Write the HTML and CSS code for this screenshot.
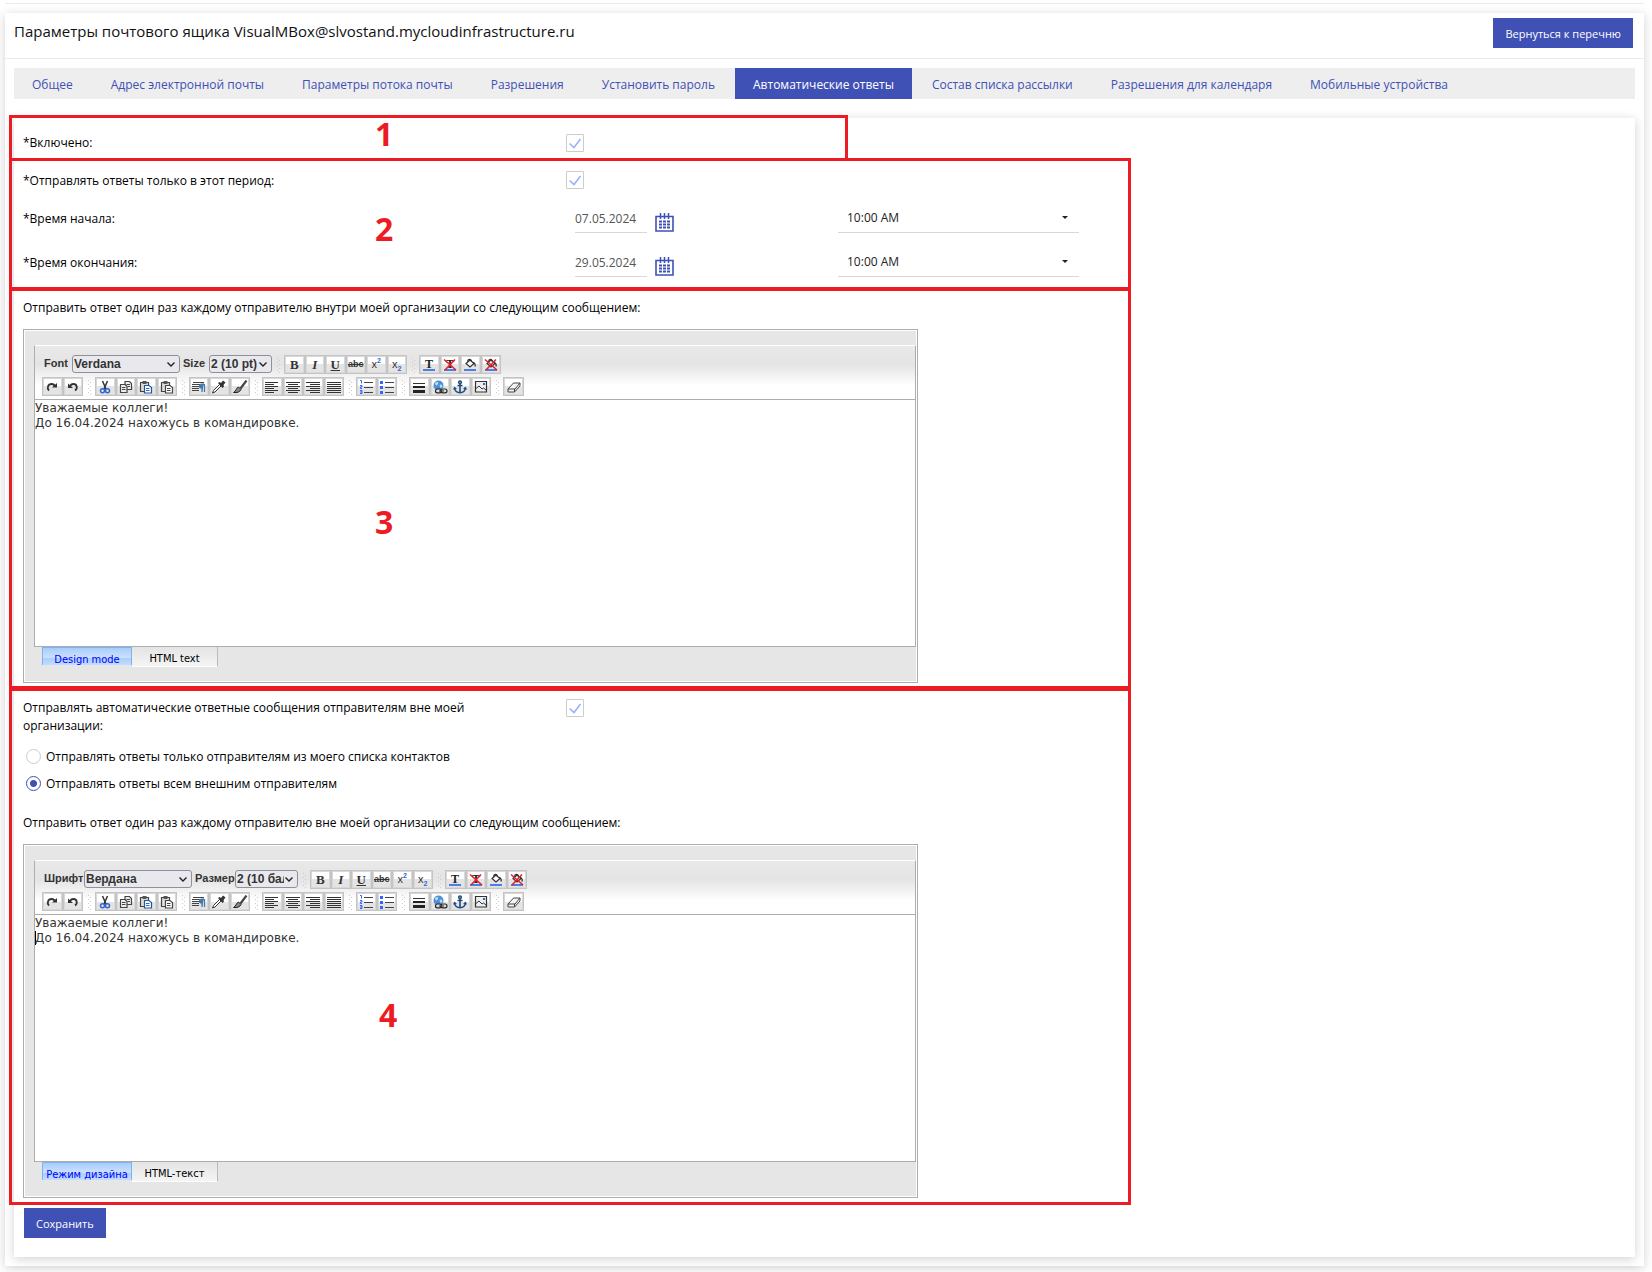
FILE: index.html
```html
<!DOCTYPE html>
<html lang="ru">
<head>
<meta charset="utf-8">
<title>Параметры почтового ящика</title>
<meta name="viewport" content="width=device-width, initial-scale=1">
<link rel="stylesheet" href="styles.css">
</head>
<body>
<svg class="sprite" aria-hidden="true">
  <symbol id="i-redo" viewBox="0 0 16 14"><path d="M5 10.500C2.500 8 4 4 7.500 4 9.500 4 10.500 5 11 6.500" fill="none" stroke="#333" stroke-width="1.800"/><path d="M8 7.500h5V3z" fill="#333"/></symbol>
  <symbol id="i-undo" viewBox="0 0 16 14"><path d="M10 10.500C13 8.500 12 4 8.500 4 6.500 4 5.500 5 5 6.500" fill="none" stroke="#333" stroke-width="1.800"/><path d="M8 8H3V3.500z" fill="#333"/></symbol>
  <symbol id="i-cut" viewBox="0 0 16 14"><path d="M5.500 1 9 9M10.500 1 7 9" stroke="#333" stroke-width="1.500"/><g fill="none" stroke="#36c" stroke-width="1.500"><circle cx="5.500" cy="10.700" r="2"/><circle cx="10.500" cy="10.700" r="2"/></g></symbol>
  <symbol id="i-copy" viewBox="0 0 16 14"><g fill="#eee" stroke="#444" stroke-width="1.200"><path d="M7 1.500h4.500L13.500 3.500v6H7z"/><path d="M2.500 4.500H7l2 2v6H2.500z"/></g><path d="M8.500 4.500h3.500M9.500 6.500H12M4 7.500h3.500M4 9.500h3.500" stroke="#444"/></symbol>
  <symbol id="i-paste" viewBox="0 0 16 14"><path d="M2.500 2.500h8v9h-8z" fill="#ddd" stroke="#444" stroke-width="1.200"/><path d="M4.500 1h4v3h-4z" fill="#555"/><path d="M6.500 5.500H11l2.500 2v5.500h-7z" fill="#fff" stroke="#259" stroke-width="1.200"/><path d="M8 8.500h3.500M8 10.500h3.500" stroke="#36c"/></symbol>
  <symbol id="i-plain" viewBox="0 0 16 14"><path d="M2.500 2.500h8v9h-8z" fill="#ddd" stroke="#444" stroke-width="1.200"/><path d="M4.500 1h4v3h-4z" fill="#555"/><path d="M6.500 5.500H11l2.500 2v5.500h-7z" fill="#fff" stroke="#444" stroke-width="1.200"/><path d="M8 8.500h3.500M8 10.500h3.500" stroke="#444"/></symbol>
  <symbol id="i-para" viewBox="0 0 16 14"><path d="M2 2.500h11M1 4.500h8M1 6.500h7M1 8.500h7M1 10.500h7" stroke="#444"/><path d="M13 4h-2.500a2 2 0 0 0 0 4h.500v4M13.500 4v8" fill="#47a" stroke="#47a" stroke-width="1.200"/></symbol>
  <symbol id="i-pick" viewBox="0 0 16 14"><path d="M1.500 13l1-2.500 6-6 1.500 1.500-6 6z" fill="#fff" stroke="#333"/><path d="M7 3l1.500-1 1.500 1L12 .500l2.500 2L12.500 5l.500 1.500L11.500 8z" fill="#333"/></symbol>
  <symbol id="i-brush" viewBox="0 0 16 14"><path d="M14.500 .500 8.500 8.500" stroke="#444" stroke-width="2.200"/><path d="M6.500 7 9 9.500c-1 2.500-4 3.500-7.500 3C4 11.500 4 8 6.500 7z" fill="#888" stroke="#222"/></symbol>
  <symbol id="i-left" viewBox="0 0 16 14"><path d="M1 2.500h13M1 4.500h9M1 6.500h13M1 8.500h9M1 10.500h13M1 12.500h9" stroke="#333"/></symbol>
  <symbol id="i-center" viewBox="0 0 16 14"><path d="M1 2.500h14M3 4.500h10M1 6.500h14M3 8.500h10M1 10.500h14M3 12.500h10" stroke="#333"/></symbol>
  <symbol id="i-right" viewBox="0 0 16 14"><path d="M1 2.500h14M5 4.500h10M1 6.500h14M5 8.500h10M1 10.500h14M5 12.500h10" stroke="#333"/></symbol>
  <symbol id="i-full" viewBox="0 0 16 14"><path d="M1 2.500h14M1 4.500h14M1 6.500h14M1 8.500h14M1 10.500h14M1 12.500h14" stroke="#333"/></symbol>
  <symbol id="i-ol" viewBox="0 0 16 14"><path d="M6 2.500h9M6 7.500h9M6 12.500h9" stroke="#444"/><path d="M2 .500h1.500v3M2 5.500h2v1.500H2.500V8.500H4M2 10.500h2V12H2M4 12v1.500H2" fill="none" stroke="#36f"/></symbol>
  <symbol id="i-ul" viewBox="0 0 16 14"><path d="M6 2.500h9M6 7.500h9M6 12.500h9" stroke="#444"/><path d="M1 1h3v3H1zM1 6h3v3H1zM1 11h3v3H1z" fill="#36f"/></symbol>
  <symbol id="i-rule" viewBox="0 0 16 14"><path d="M2 3.500h12" stroke="#333"/><path d="M2 7h12" stroke="#222" stroke-width="2"/><path d="M2 11.500h12" stroke="#222" stroke-width="3"/></symbol>
  <symbol id="i-link" viewBox="0 0 16 14"><circle cx="6.500" cy="5.500" r="5" fill="#4a90d8"/><path d="M3 3c2-2 4-1 3 1S3 6 3 3zM7.500 5c2-1 3 0 3 2l-2 1z" fill="#bde"/><g fill="#ddd" stroke="#222" stroke-width="1.200"><rect x="3.500" y="9" width="6" height="3.800" rx="1.900"/><rect x="9" y="9" width="6" height="3.800" rx="1.900"/></g><path d="M7 11h5" stroke="#222"/></symbol>
  <symbol id="i-anchor" viewBox="0 0 16 14"><g fill="none" stroke="#1f4a80" stroke-width="1.600"><circle cx="8" cy="2.300" r="1.300"/><path d="M8 3.500V13M5.500 5.500h5M2.500 8C3 11.500 5.500 12.700 8 12.700S13 11.500 13.500 8"/></g><path d="M1 9.500 2.500 6.500 5 9zM15 9.500 13.500 6.500 11 9z" fill="#1f4a80"/></symbol>
  <symbol id="i-image" viewBox="0 0 16 14"><path d="M2.500 1.500h11v10.500h-11z" fill="#eee" stroke="#333" stroke-width="1.200"/><path d="M3 8.500 6 6l3 3 1.500-1L13 10" fill="none" stroke="#333"/><path d="M10 3h2v2h-2z" fill="#36c"/></symbol>
  <symbol id="i-erase" viewBox="0 0 16 14"><path d="M2 9 7.500 3H14L9 9zM2 9v3h6.500V9M8.500 12 14 6V3" fill="#f4f4f4" stroke="#444"/></symbol>
  <symbol id="i-bucket" viewBox="0 0 16 14"><path d="M4 5.500 8 2l4 3.500L8 9z" fill="#fff" stroke="#333" stroke-width="1.200"/><path d="M6 4c-1-3 3-4 3.500-.500M11 4.500c2 .500 2.500 2 2 4" fill="none" stroke="#333" stroke-width="1.300"/></symbol>
  <symbol id="i-bar" viewBox="0 0 16 14"><path d="M2 11h12v2H2z" fill="#4a7fe8"/></symbol>
  <symbol id="i-cross" viewBox="0 0 16 14"><path d="M2 1.500 14 12M13 1.500 3 12" stroke="#e8202a" stroke-width="1.600"/></symbol>
  <symbol id="i-t" viewBox="0 0 16 14"><text x="8" y="10" text-anchor="middle" font-family="Liberation Serif, serif" font-weight="bold" font-size="12" fill="#222">T</text></symbol>
  <symbol id="i-cal" viewBox="0 0 19 19"><path d="M1 3.500h17v14.500H1z" fill="none" stroke="#3f51b5" stroke-width="1.600"/><path d="M5.500 0v6M9.500 0v6M13.500 0v6" stroke="#3f51b5" stroke-width="1.500"/><path d="M4 8.500h11M4 11.500h11M4 14.500h11" stroke="#3f51b5" stroke-width="1.800" stroke-dasharray="3 1"/></symbol>
</svg>

<div class="topline"></div>
<main class="panel">
  <header class="panel-head">
    <h1>Параметры почтового ящика VisualMBox@slvostand.mycloudinfrastructure.ru</h1>
    <button class="btn" type="button">Вернуться к перечню</button>
  </header>
  <nav class="tabs">
    <a href="#">Общее</a>
    <a href="#">Адрес электронной почты</a>
    <a href="#">Параметры потока почты</a>
    <a href="#">Разрешения</a>
    <a href="#">Установить пароль</a>
    <a href="#" class="active" aria-current="page">Автоматические ответы</a>
    <a href="#">Состав списка рассылки</a>
    <a href="#">Разрешения для календаря</a>
    <a href="#">Мобильные устройства</a>
  </nav>

  <form class="card">
    <section class="zone zone-short">
      <span class="num">1</span>
      <div class="row row-first">
        <label for="enabled">*Включено:</label>
        <input class="check" type="checkbox" id="enabled" checked>
      </div>
    </section>

    <section class="zone">
      <span class="num num-mid">2</span>
      <div class="row row-check">
        <label for="period">*Отправлять ответы только в этот период:</label>
        <input class="check" type="checkbox" id="period" checked>
      </div>
      <div class="row row-time">
        <label for="d1">*Время начала:</label>
        <div class="date"><input type="text" id="d1" value="07.05.2024"><button type="button" class="cal" aria-label="Календарь"><svg><use href="#i-cal"/></svg></button></div>
        <select class="time" aria-label="Время начала"><option>10:00 AM</option></select>
      </div>
      <div class="row row-time">
        <label for="d2">*Время окончания:</label>
        <div class="date"><input type="text" id="d2" value="29.05.2024"><button type="button" class="cal" aria-label="Календарь"><svg><use href="#i-cal"/></svg></button></div>
        <select class="time" aria-label="Время окончания"><option>10:00 AM</option></select>
      </div>
    </section>

    <section class="zone zone-inside">
      <span class="num num-ed">3</span>
      <p class="caption" id="cap1">Отправить ответ один раз каждому отправителю внутри моей организации со следующим сообщением:</p>
      <div class="editor">
        <div class="frame">
          <div class="toolbar">
            <div class="line">
              <label for="f1" class="lab-font">Font</label>
              <select id="f1" class="sel-font"><option>Verdana</option></select>
              <label for="s1" class="lab-size">Size</label>
              <select id="s1" class="sel-size"><option>2 (10 pt)</option></select>
              <i class="sep"></i>
              <div class="group g6">
                <button type="button" class="serif"><b>B</b></button><button type="button" class="serif"><b><em>I</em></b></button><button type="button" class="serif"><b><u>U</u></b></button><button type="button" class="strike"><s>abc</s></button><button type="button" class="idx">x<sup>2</sup></button><button type="button" class="idx">x<sub>2</sub></button>
              </div>
              <i class="sep"></i>
              <div class="group g4">
                <button type="button" aria-label="Text color"><svg><use href="#i-t"/><use href="#i-bar"/></svg></button><button type="button" aria-label="No text color"><svg><use href="#i-t"/><use href="#i-bar"/><use href="#i-cross"/></svg></button><button type="button" aria-label="Fill"><svg><use href="#i-bucket"/><use href="#i-bar"/></svg></button><button type="button" aria-label="No fill"><svg><use href="#i-bucket"/><use href="#i-bar"/><use href="#i-cross"/></svg></button>
              </div>
            </div>
            <div class="line">
              <div class="group g2"><button type="button" aria-label="Redo"><svg><use href="#i-redo"/></svg></button><button type="button" aria-label="Undo"><svg><use href="#i-undo"/></svg></button></div>
              <i class="sep"></i>
              <div class="group g4"><button type="button" aria-label="Cut"><svg><use href="#i-cut"/></svg></button><button type="button" aria-label="Copy"><svg><use href="#i-copy"/></svg></button><button type="button" aria-label="Paste"><svg><use href="#i-paste"/></svg></button><button type="button" aria-label="Paste plain"><svg><use href="#i-plain"/></svg></button></div>
              <i class="sep"></i>
              <div class="group g3"><button type="button" aria-label="Paragraph"><svg><use href="#i-para"/></svg></button><button type="button" aria-label="Picker"><svg><use href="#i-pick"/></svg></button><button type="button" aria-label="Brush"><svg><use href="#i-brush"/></svg></button></div>
              <i class="sep"></i>
              <div class="group g4"><button type="button" aria-label="Left"><svg><use href="#i-left"/></svg></button><button type="button" aria-label="Center"><svg><use href="#i-center"/></svg></button><button type="button" aria-label="Right"><svg><use href="#i-right"/></svg></button><button type="button" aria-label="Justify"><svg><use href="#i-full"/></svg></button></div>
              <i class="sep"></i>
              <div class="group g2"><button type="button" aria-label="Numbers"><svg><use href="#i-ol"/></svg></button><button type="button" aria-label="Bullets"><svg><use href="#i-ul"/></svg></button></div>
              <i class="sep"></i>
              <div class="group g4"><button type="button" aria-label="Rule"><svg><use href="#i-rule"/></svg></button><button type="button" aria-label="Link"><svg><use href="#i-link"/></svg></button><button type="button" aria-label="Anchor"><svg><use href="#i-anchor"/></svg></button><button type="button" aria-label="Image"><svg><use href="#i-image"/></svg></button></div>
              <i class="sep"></i>
              <div class="group g1"><button type="button" aria-label="Erase"><svg><use href="#i-erase"/></svg></button></div>
            </div>
          </div>
          <div class="text" contenteditable="true" role="textbox" aria-multiline="true" aria-labelledby="cap1" spellcheck="false">Уважаемые коллеги!<br>До 16.04.2024 нахожусь в командировке.</div>
        </div>
        <div class="modes"><button type="button" class="on">Design mode</button><button type="button">HTML text</button></div>
      </div>
    </section>

    <section class="zone zone-outside">
      <span class="num num-ed">4</span>
      <div class="row">
        <label for="ext">Отправлять автоматические ответные сообщения отправителям вне моей организации:</label>
        <input class="check" type="checkbox" id="ext" checked>
      </div>
      <div class="radios">
        <label><input type="radio" name="who">Отправлять ответы только отправителям из моего списка контактов</label>
        <label><input type="radio" name="who" checked>Отправлять ответы всем внешним отправителям</label>
      </div>
      <p class="caption" id="cap2">Отправить ответ один раз каждому отправителю вне моей организации со следующим сообщением:</p>
      <div class="editor">
        <div class="frame">
          <div class="toolbar">
            <div class="line">
              <label for="f2" class="lab-font lab-wide">Шрифт</label>
              <select id="f2" class="sel-font"><option>Вердана</option></select>
              <label for="s2" class="lab-size lab-wide">Размер</label>
              <select id="s2" class="sel-size"><option>2 (10 баллов)</option></select>
              <i class="sep"></i>
              <div class="group g6">
                <button type="button" class="serif"><b>B</b></button><button type="button" class="serif"><b><em>I</em></b></button><button type="button" class="serif"><b><u>U</u></b></button><button type="button" class="strike"><s>abc</s></button><button type="button" class="idx">x<sup>2</sup></button><button type="button" class="idx">x<sub>2</sub></button>
              </div>
              <i class="sep"></i>
              <div class="group g4">
                <button type="button" aria-label="Цвет текста"><svg><use href="#i-t"/><use href="#i-bar"/></svg></button><button type="button" aria-label="Без цвета"><svg><use href="#i-t"/><use href="#i-bar"/><use href="#i-cross"/></svg></button><button type="button" aria-label="Заливка"><svg><use href="#i-bucket"/><use href="#i-bar"/></svg></button><button type="button" aria-label="Без заливки"><svg><use href="#i-bucket"/><use href="#i-bar"/><use href="#i-cross"/></svg></button>
              </div>
            </div>
            <div class="line">
              <div class="group g2"><button type="button" aria-label="Вернуть"><svg><use href="#i-redo"/></svg></button><button type="button" aria-label="Отменить"><svg><use href="#i-undo"/></svg></button></div>
              <i class="sep"></i>
              <div class="group g4"><button type="button" aria-label="Вырезать"><svg><use href="#i-cut"/></svg></button><button type="button" aria-label="Копировать"><svg><use href="#i-copy"/></svg></button><button type="button" aria-label="Вставить"><svg><use href="#i-paste"/></svg></button><button type="button" aria-label="Вставить текст"><svg><use href="#i-plain"/></svg></button></div>
              <i class="sep"></i>
              <div class="group g3"><button type="button" aria-label="Абзац"><svg><use href="#i-para"/></svg></button><button type="button" aria-label="Пипетка"><svg><use href="#i-pick"/></svg></button><button type="button" aria-label="Кисть"><svg><use href="#i-brush"/></svg></button></div>
              <i class="sep"></i>
              <div class="group g4"><button type="button" aria-label="Влево"><svg><use href="#i-left"/></svg></button><button type="button" aria-label="По центру"><svg><use href="#i-center"/></svg></button><button type="button" aria-label="Вправо"><svg><use href="#i-right"/></svg></button><button type="button" aria-label="По ширине"><svg><use href="#i-full"/></svg></button></div>
              <i class="sep"></i>
              <div class="group g2"><button type="button" aria-label="Нумерация"><svg><use href="#i-ol"/></svg></button><button type="button" aria-label="Маркеры"><svg><use href="#i-ul"/></svg></button></div>
              <i class="sep"></i>
              <div class="group g4"><button type="button" aria-label="Линия"><svg><use href="#i-rule"/></svg></button><button type="button" aria-label="Ссылка"><svg><use href="#i-link"/></svg></button><button type="button" aria-label="Якорь"><svg><use href="#i-anchor"/></svg></button><button type="button" aria-label="Рисунок"><svg><use href="#i-image"/></svg></button></div>
              <i class="sep"></i>
              <div class="group g1"><button type="button" aria-label="Ластик"><svg><use href="#i-erase"/></svg></button></div>
            </div>
          </div>
          <div class="text" contenteditable="true" role="textbox" aria-multiline="true" aria-labelledby="cap2" spellcheck="false">Уважаемые коллеги!<br><span class="caret"></span>До 16.04.2024 нахожусь в командировке.</div>
        </div>
        <div class="modes"><button type="button" class="on">Режим дизайна</button><button type="button">HTML-текст</button></div>
      </div>
    </section>

    <button class="btn save" type="submit">Сохранить</button>
  </form>
</main>
</body>
</html>
```
FILE: styles.css
```css
* { box-sizing: border-box; }

body {
  margin: 0;
  padding: 3px 8px 6px 5px;
  background: #fff;
  color: #000;
  font: 12px/18px "Open Sans", "Noto Sans", sans-serif;
}

button, input, select { font: inherit; color: inherit; margin: 0; }
.sprite { display: none; }

.topline { height: 10px; border-top: 1px solid #ebebeb; }

.panel {
  padding-bottom: 9px;
  background: #fff;
  box-shadow: 0 2px 10px rgba(0, 0, 0, .18);
}

.panel-head {
  display: flex;
  justify-content: space-between;
  align-items: flex-start;
  height: 46px;
  padding: 5px 11px 0 9px;
  border-bottom: 1px solid #ebebeb;
}
h1 { margin: 0; font-size: 15px; font-weight: 400; line-height: 26px; color: #111; }

.btn {
  height: 30px;
  padding: 1px 12px 0;
  border: 0;
  background: #3f51b5;
  color: #fff;
  font-size: 11px;
}

.tabs {
  display: flex;
  gap: 2px;
  margin: 9px 9px 19px;
  background: #eee;
}
.tabs a {
  padding: 2px 18px 0;
  line-height: 29px;
  color: #3f51b5;
  text-decoration: none;
  white-space: nowrap;
}
.tabs .active { background: #3f51b5; color: #fff; }

.card {
  display: flow-root;
  margin: 0 9px;
  padding-bottom: 19px;
  background: #fff;
  box-shadow: 0 2px 10px rgba(0, 0, 0, .18);
}

/* Numbered red frames around the groups of settings */
.zone {
  position: relative;
  max-width: 1122px;
  margin: -3px 0 0 -5px;
  padding-left: 11px;
  border: 3px solid #ed1c24;
}
.zone-short { max-width: 839px; }
.zone-inside { margin-top: -2px; padding-top: 8px; padding-bottom: 3px; }
.zone-outside { margin-top: -1px; padding-top: 8px; padding-bottom: 4px; }
.num {
  position: absolute;
  left: 363px;
  top: 0;
  color: #ed1c24;
  font-size: 32px;
  font-weight: 700;
  line-height: 32px;
}
.num-mid { top: 52px; }
.num-ed { top: 215px; }
.zone-outside .num-ed { top: 308px; left: 367px; }

.row { display: grid; grid-template-columns: 543px 272px 241px; }
.row > label { padding-right: 40px; }
.row-first { align-items: center; padding-top: 10px; height: 40px; }
.row-check { align-items: center; height: 38px; }
.row-check label { padding-top: 1px; }
.row-time { height: 44px; padding-top: 10px; }
.row-time label { padding-top: 1px; }

.check {
  appearance: none;
  width: 18px;
  height: 18px;
  border: 1px solid #ccc;
  border-radius: 1px;
  background: #fff;
}
.check:checked {
  background: #fff url("data:image/svg+xml,%3Csvg xmlns='http://www.w3.org/2000/svg' viewBox='0 0 16 16'%3E%3Cpath d='M2.500 8.500 7 12.500 13.500 4' fill='none' stroke='%23a4aefc' stroke-width='1.600'/%3E%3C/svg%3E");
}

.date { display: flex; gap: 8px; padding-left: 9px; }
.date input {
  width: 72px;
  height: 24px;
  padding: 0 0 5px;
  border: 0;
  border-bottom: 1px solid #d8d8d8;
  background: none;
  color: #555;
}
.cal { width: 19px; height: 19px; margin-top: 4px; padding: 0; border: 0; background: none; }
.cal svg { display: block; width: 19px; height: 19px; }

.time {
  appearance: none;
  height: 24px;
  padding: 0 9px 7px;
  border: 0;
  border-bottom: 1px solid #d8d8d8;
  border-radius: 0;
  background: url("data:image/svg+xml,%3Csvg xmlns='http://www.w3.org/2000/svg' width='6' height='3'%3E%3Cpath d='M0 0h6L3 3z' fill='%23222'/%3E%3C/svg%3E") no-repeat right 11px top 7px;
  color: #222;
}

.caption { margin: 0 0 12px; }

.radios { display: grid; grid-auto-rows: 27px; padding: 8px 0 17px 3px; }
.radios label { display: flex; align-items: center; gap: 5px; }
.radios input {
  appearance: none;
  width: 15px;
  height: 15px;
  border: 1px solid #ccc;
  border-radius: 50%;
  background: #fff;
}
.radios input:checked {
  border-color: #3f51b5;
  background: radial-gradient(circle, #3f51b5 0 3px, #fff 4px);
}

/* Rich text editor */
.editor {
  max-width: 895px;
  padding: 15px 0 15px 10px;
  border: 1px solid #adadad;
  outline: 1px solid #fff;
  outline-offset: -2px;
  background: #e6e6e6;
}
.frame { margin-right: 1px; border: 1px solid #adadad; border-top-color: #fff; }
.toolbar {
  display: grid;
  grid-auto-rows: 19px;
  row-gap: 3px;
  padding: 9px 7px 3px;
  border-bottom: 1px solid #adadad;
  background: linear-gradient(#e9e9e9, #e4e4e4 35%, #fff 75%);
  font: bold 12px/16px "Liberation Sans", Arial, sans-serif;
  color: #333;
}
.line { display: flex; }
.line label { font-size: 11px; }
.lab-font { width: 30px; padding-left: 2px; }
.lab-size { width: 29px; padding-left: 3px; }
.lab-font.lab-wide { width: 42px; }
.lab-size.lab-wide { width: 43px; }
.toolbar select {
  appearance: none;
  height: 18px;
  padding: 0 20px 0 1px;
  border: 1px solid #8f8f9d;
  border-radius: 3px;
  background: #e9e9ed url("data:image/svg+xml,%3Csvg xmlns='http://www.w3.org/2000/svg' width='8' height='5'%3E%3Cpath d='M.5 .5 4 4 7.500 .5' fill='none' stroke='%23222' stroke-width='1.400'/%3E%3C/svg%3E") no-repeat right 4px center;
  overflow: hidden;
}
.toolbar .sel-font { width: 108px; }
.toolbar .sel-size { width: 63px; padding-right: 13px; }

.sep {
  width: 12px;
  background:
    repeating-linear-gradient(#ccc 0 1px, transparent 1px 4px) 5px 3px / 1px 13px no-repeat,
    repeating-linear-gradient(#ccc 0 1px, transparent 1px 4px) 7px 5px / 1px 13px no-repeat;
}
.group { display: flex; }
.g1 { width: 21px; }
.g2 { width: 41px; }
.g3 { width: 61px; }
.g4 { width: 82px; }
.g6 { width: 123px; }
.group button {
  flex: 1 1 0;
  min-width: 0;
  padding: 0;
  border: 1px solid #c4c4c4;
  outline: 1px solid #d8d8d8;
  outline-offset: -2px;
  background: linear-gradient(#fff 50%, #e4e4e4 50%);
  line-height: 15px;
}
.group svg { display: block; width: 16px; height: 14px; margin: 0 auto; }
.group .serif { font-family: "Liberation Serif", serif; font-size: 13px; }
.group .strike { font-size: 9px; }
.group .idx { font-weight: 400; font-size: 11px; }
.idx sup, .idx sub { color: #36c; font-size: 7px; font-weight: 700; line-height: 0; }

.text {
  height: 246px;
  padding-top: 1px;
  background: #fff;
  color: #333;
  font: 12px/15px "DejaVu Sans", Verdana, sans-serif;
}
.caret { border-left: 1px solid #000; margin-right: -1px; }

.modes {
  display: flex;
  align-items: flex-start;
  padding-left: 8px;
  font-family: "DejaVu Sans Condensed", "DejaVu Sans", Tahoma, sans-serif;
  font-size: 11px;
}
.modes button {
  width: 86px;
  height: 20px;
  padding: 3px 0 0;
  border: 0;
  border-right: 1px solid #bbb;
  border-bottom: 1px solid #fff;
  background: linear-gradient(#e4e4e4, #f4f4f4);
}
.modes .on {
  width: 90px;
  height: 18px;
  padding-top: 7px;
  border: 1px solid #7fb2f5;
  border-bottom: 0;
  background: linear-gradient(#a6cdfb, #cfe2ff 60%, #a9cffc 60%, #c4dcff);
  color: #00f;
  line-height: 10px;
}

.save { display: block; margin: 3px 0 0 10px; }
```
